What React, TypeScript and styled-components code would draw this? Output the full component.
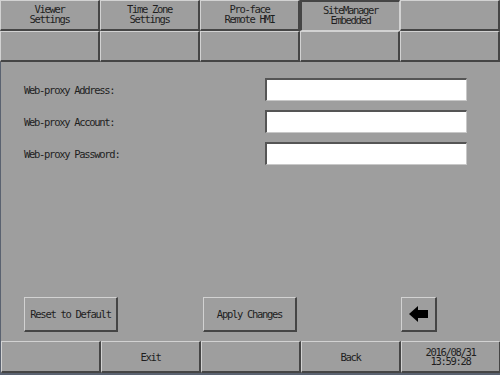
import React from 'react';
import styled, { createGlobalStyle, css } from 'styled-components';

const GlobalStyle = createGlobalStyle`
  html, body {
    margin: 0;
    padding: 0;
    background: #9e9e9e;
  }
`;

const Screen = styled.div`
  width: 500px;
  height: 375px;
  display: flex;
  flex-direction: column;
  background: #9e9e9e;
  font-family: 'DejaVu Sans Mono', 'Liberation Mono', monospace;
  font-size: 10.5px;
  letter-spacing: -1.3px;
  color: #1e1e1e;
  overflow: hidden;
`;

const TabRow = styled.div`
  display: grid;
  grid-template-columns: repeat(5, 100px);
  height: 31px;
`;

const raised = css`
  border-top: 1px solid #d2d2d2;
  border-left: 1px solid #d2d2d2;
  border-right: 2px solid #454545;
  border-bottom: 2px solid #454545;
`;

const pressed = css`
  border-top: 2px solid #454545;
  border-left: 2px solid #454545;
  border-right: 1px solid #d2d2d2;
  border-bottom: 1px solid #d2d2d2;
`;

const Cell = styled.div<{ $active?: boolean; $low?: boolean }>`
  box-sizing: border-box;
  display: flex;
  align-items: center;
  justify-content: center;
  text-align: center;
  line-height: 10px;
  white-space: pre;
  padding-bottom: ${(p) => (p.$low ? 0 : 2)}px;
  ${(p) => (p.$active ? pressed : raised)}
`;

const Content = styled.div`
  flex: 1;
  display: flex;
  flex-direction: column;
  border-left: 1px solid #5a6270;
  padding: 16px 33px 0 23px;
`;

const Form = styled.div`
  display: flex;
  flex-direction: column;
  gap: 9px;
`;

const Field = styled.div`
  display: flex;
  align-items: center;
  justify-content: space-between;
`;

const Label = styled.span`
  padding-top: 1px;
`;

const Input = styled.div`
  box-sizing: border-box;
  width: 202px;
  height: 23px;
  background: #fff;
  border-top: 2px solid #555;
  border-left: 2px solid #555;
  border-right: 1px solid #c8c8c8;
  border-bottom: 1px solid #c8c8c8;
`;

const ActionBar = styled.div`
  margin-top: auto;
  margin-bottom: 9px;
  display: flex;
  align-items: center;
`;

const ActionButton = styled.div<{ $width: number; $gap: number }>`
  box-sizing: border-box;
  width: ${(p) => p.$width}px;
  height: 35px;
  margin-left: ${(p) => p.$gap}px;
  display: flex;
  align-items: center;
  justify-content: center;
  ${raised}
`;

const BottomRow = styled.div`
  box-sizing: border-box;
  display: grid;
  grid-template-columns: repeat(5, 100px);
  height: 34px;
  border-left: 1px solid #5a6270;
  border-bottom: 2px solid #5a6270;
`;

const DateCell = styled(Cell)`
  line-height: 9px;
`;

const ArrowIcon = () => (
  <svg width="20" height="16" viewBox="0 0 20 16">
    <path d="M0 8 L9 0 L9 4 L19 4 L19 12 L9 12 L9 16 Z" fill="#000" />
  </svg>
);

const tabs = ['Viewer\nSettings', 'Time Zone\nSettings', 'Pro-face\nRemote HMI', 'SiteManager\nEmbedded', ''];

const App = () => (
  <>
    <GlobalStyle />
    <Screen>
      <TabRow>
        {tabs.map((t, i) => (
          <Cell key={i} $active={i === 3}>{t}</Cell>
        ))}
      </TabRow>
      <TabRow>
        {tabs.map((_, i) => (
          <Cell key={i} />
        ))}
      </TabRow>
      <Content>
        <Form>
          <Field>
            <Label>Web-proxy Address:</Label>
            <Input />
          </Field>
          <Field>
            <Label>Web-proxy Account:</Label>
            <Input />
          </Field>
          <Field>
            <Label>Web-proxy Password:</Label>
            <Input />
          </Field>
        </Form>
        <ActionBar>
          <ActionButton $width={94} $gap={0}>Reset to Default</ActionButton>
          <ActionButton $width={94} $gap={85}>Apply Changes</ActionButton>
          <ActionButton $width={36} $gap={104}>
            <ArrowIcon />
          </ActionButton>
        </ActionBar>
      </Content>
      <BottomRow>
        <Cell $low />
        <Cell $low>Exit</Cell>
        <Cell $low />
        <Cell $low>Back</Cell>
        <DateCell $low>{'2016/08/31\n13:59:28'}</DateCell>
      </BottomRow>
    </Screen>
  </>
);

export default App;
